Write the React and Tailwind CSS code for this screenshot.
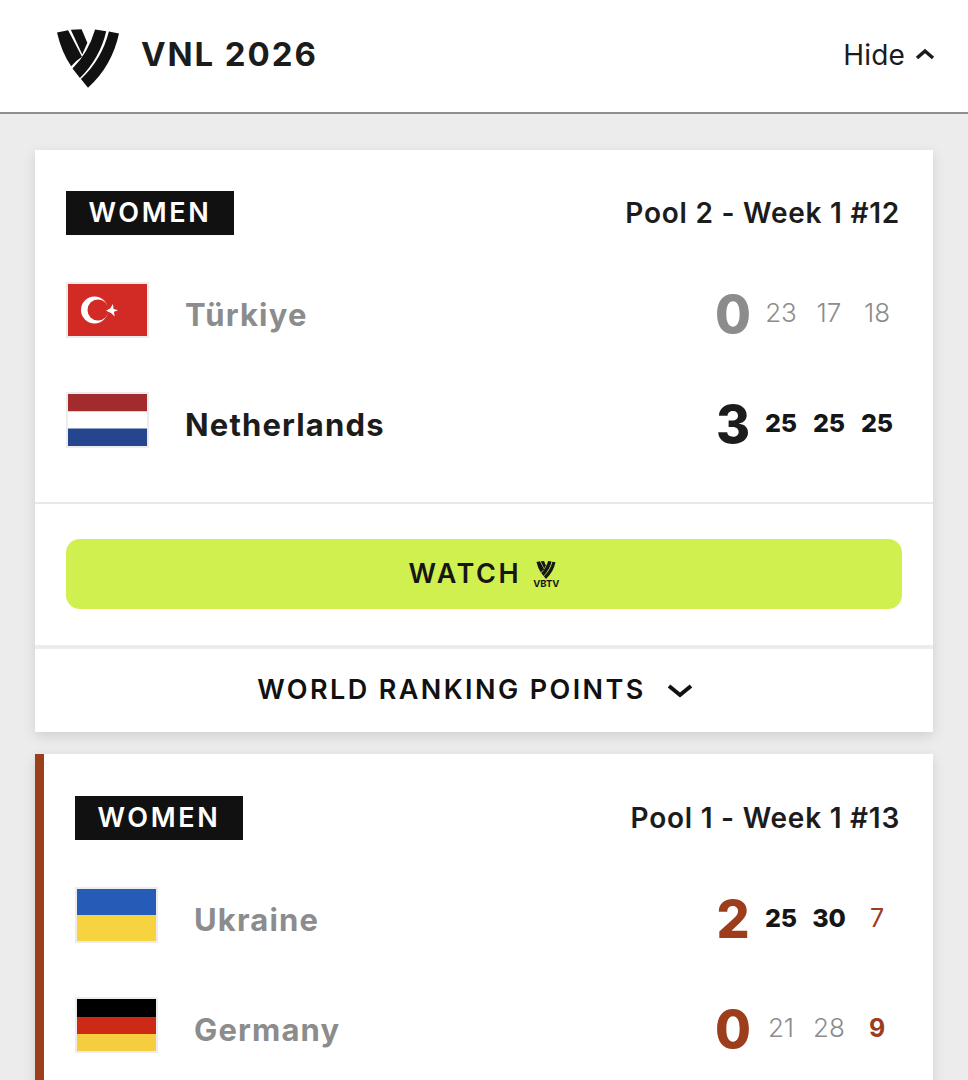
const MATCHES = [
  {
    id: 12,
    pool: 'Pool 2 - Week 1 #12',
    live: false,
    teams: [
      { name: 'Türkiye', flag: 'tr', score: 0, won: false, sets: [{ v: 23 }, { v: 17 }, { v: 18 }] },
      { name: 'Netherlands', flag: 'nl', score: 3, won: true, sets: [{ v: 25, win: true }, { v: 25, win: true }, { v: 25, win: true }] },
    ],
  },
  {
    id: 13,
    pool: 'Pool 1 - Week 1 #13',
    live: true,
    teams: [
      { name: 'Ukraine', flag: 'ua', score: 2, won: false, sets: [{ v: 25, win: true }, { v: 30, win: true }, { v: 7, current: true }] },
      { name: 'Germany', flag: 'de', score: 0, won: false, sets: [{ v: 21 }, { v: 28 }, { v: 9, current: true, lead: true }] },
    ],
  },
];

const Logo = ({ className }) => (
  <svg viewBox="172 90 184 174" className={className} fill="currentColor">
    <path d="M172 100 L205 93 L246 172 Q228 184 214 200 Q186 160 172 100 Z" />
    <path d="M213 92 L245 90 L262 130 L247 165 Z" />
    <path d="M285 91 L318 96 Q300 175 240 235 L218 207 Q265 160 285 91 Z" />
    <path d="M326 97 L356 103 Q335 200 264 264 L243 238 Q305 180 326 97 Z" />
  </svg>
);

const Flag = ({ code }) => (
  <div className="w-[83px] h-[56px] shrink-0 border-2 border-[#ececec]">
    <svg viewBox="0 0 79 52" preserveAspectRatio="none" className="block w-full h-full">
      {code === 'tr' && (
        <>
          <rect width="79" height="52" fill="#d22a25" />
          <circle cx="26.5" cy="26" r="13.5" fill="#fff" />
          <circle cx="30" cy="26" r="10.5" fill="#d22a25" />
          <polygon fill="#fff" points="38,26 42.6,24.1 45.7,20.3 45.7,25.2 50,27 45.7,28 45.7,32.7 42.6,28.9" transform="rotate(-8 44 26)" />
        </>
      )}
      {code === 'nl' && (
        <>
          <rect width="79" height="17.5" fill="#a12b2d" />
          <rect y="17.5" width="79" height="17" fill="#fff" />
          <rect y="34.5" width="79" height="17.5" fill="#26458f" />
        </>
      )}
      {code === 'ua' && (
        <>
          <rect width="79" height="26" fill="#275bb8" />
          <rect y="26" width="79" height="26" fill="#f8d340" />
        </>
      )}
      {code === 'de' && (
        <>
          <rect width="79" height="18" fill="#000" />
          <rect y="18" width="79" height="17" fill="#cc2a17" />
          <rect y="35" width="79" height="17" fill="#f6cd3e" />
        </>
      )}
    </svg>
  </div>
);

const setClass = (s) => {
  if (s.current && s.lead) return 'text-[25px] font-bold text-[#9c3d1c]';
  if (s.current) return 'text-[25px] font-normal text-[#9c3d1c]';
  if (s.win) return 'text-[25px] font-extrabold text-[#161616]';
  return 'text-[26px] font-light text-[#8c8c8c]';
};

const TeamRow = ({ team, live }) => {
  const scoreColor = live ? 'text-[#9c3d1c]' : team.won ? 'text-[#1c1c1c]' : 'text-[#8c8c8c]';
  return (
    <div className="flex items-center h-[56px]">
      <Flag code={team.flag} />
      <div className={`ml-[36px] flex-1 text-[31px] font-bold tracking-[1.15px] pt-[11px] ${team.won ? 'text-[#1c1c1c]' : 'text-[#8c8c8c]'}`}>
        {team.name}
      </div>
      <div className={`w-[48px] text-center text-[52px] leading-none font-extrabold pt-[10px] ${scoreColor}`}>{team.score}</div>
      <div className="flex items-center pt-[6px] mr-[-1px]">
        {team.sets.map((s, i) => (
          <div key={i} className={`w-[48px] text-center leading-none ${setClass(s)}`}>{s.v}</div>
        ))}
      </div>
    </div>
  );
};

const MatchCard = ({ match }) => (
  <div className={`bg-white shadow-[0_4px_12px_rgba(0,0,0,0.12)] ${match.live ? 'border-l-[9px] border-[#9c3d1c] pt-[42px]' : 'pt-[41px]'}`}>
    <div className="pl-[31px] pr-[33px]">
      <div className="flex items-center justify-between">
        <div className="w-[168px] h-[44px] bg-[#111111] text-white text-[27px] font-semibold tracking-[2.7px] flex items-center justify-center">
          WOMEN
        </div>
        <div className="text-[28px] font-semibold text-[#1c1c1c] tracking-[0.75px]">{match.pool}</div>
      </div>
      <div className="mt-[47px] flex flex-col gap-[54px] pb-[54px]">
        {match.teams.map((t) => (
          <TeamRow key={t.name} team={t} live={match.live} />
        ))}
      </div>
    </div>
    {!match.live && (
      <>
        <div className="h-[2px] bg-[#e8e8e8]" />
        <div className="px-[31px] pt-[35px] pb-[36px]">
          <button className="w-full h-[70px] rounded-[14px] bg-[#cff04e] flex items-center justify-center gap-[12px] text-[#161616]">
            <span className="text-[27px] font-semibold tracking-[2.5px]">WATCH</span>
            <span className="flex flex-col items-center">
              <Logo className="w-[20px] h-[18px]" />
              <span className="text-[9.5px] leading-[9px] font-bold">VBTV</span>
            </span>
          </button>
        </div>
        <div className="h-[4px] bg-[#ececec]" />
        <div className="h-[83px] flex items-center justify-center gap-[21px] pr-[18px] text-[#111111]">
          <span className="text-[27px] font-semibold tracking-[2.4px]">WORLD RANKING POINTS</span>
          <svg viewBox="0 0 26 15" className="w-[26px] h-[15px]" fill="none" stroke="currentColor" strokeWidth="4">
            <path d="M2 3 L13 12 L24 3" />
          </svg>
        </div>
      </>
    )}
  </div>
);

export default function App() {
  return (
    <div className="h-[1080px] overflow-hidden bg-[#ececec] font-['Inter',sans-serif]">
      <header className="h-[114px] bg-white border-b-2 border-[#8f8f8f] flex items-center pl-[57px] pr-[33px]">
        <Logo className="w-[62px] h-[59px] text-[#111111] mt-[5px]" />
        <div className="ml-[22px] text-[33px] font-bold tracking-[1.9px] text-[#1c1c1c] mb-[2px]">VNL 2026</div>
        <div className="ml-auto flex items-center gap-[10px] text-[#1c1c1c] mb-[2px]">
          <span className="text-[28px] font-normal tracking-[0.2px]">Hide</span>
          <svg viewBox="0 0 20 12" className="w-[20px] h-[12px] mb-[2px]" fill="none" stroke="currentColor" strokeWidth="3.5">
            <path d="M2 10 L10 3 L18 10" />
          </svg>
        </div>
      </header>
      <main className="pt-[36px] px-[35px] flex flex-col gap-[22px]">
        {MATCHES.map((m) => (
          <MatchCard key={m.id} match={m} />
        ))}
      </main>
    </div>
  );
}
